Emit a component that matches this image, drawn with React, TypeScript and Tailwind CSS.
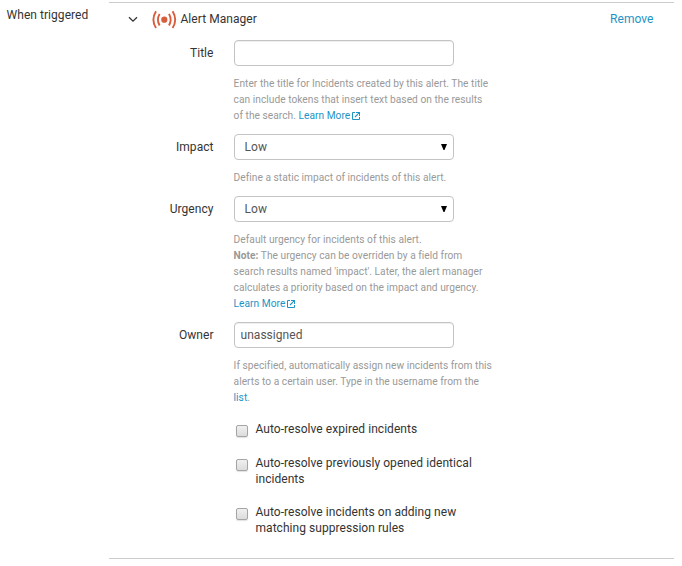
import type { ReactNode } from "react";

function ExternalIcon() {
  return (
    <svg className="ml-[2px] inline-block h-[8px] w-[8px] align-[-0.5px]" viewBox="0 0 8 8" fill="none" stroke="currentColor">
      <path d="M3 .5H.5V7.5H7.5V5" strokeWidth="1" />
      <path d="M4 .5H7.5V4M7.2 .8L3 5" strokeWidth="1.1" />
    </svg>
  );
}

function AlertIcon() {
  return (
    <svg className="h-[20px] w-[26px]" viewBox="0 0 26 20" fill="none" stroke="#d85d3c" strokeWidth="1.9">
      <circle cx="12.3" cy="9.7" r="3.1" fill="#d85d3c" stroke="none" />
      <path d="M7.6 3.9Q4.3 9.7 7.6 15.5M17 3.9Q20.3 9.7 17 15.5" />
      <path d="M4 1.3Q-1.2 9.7 4 18.1M20.6 1.3Q25.8 9.7 20.6 18.1" />
    </svg>
  );
}

function Link({ children }: { children: ReactNode }) {
  return <a className="text-[#1e93c6]">{children}</a>;
}

function Field({ label, control, children }: { label: string; control: ReactNode; children: ReactNode }) {
  return (
    <div className="mb-[10px] flex">
      <label className="w-[104.5px] pt-[5px] text-right">{label}</label>
      <div className="ml-[20.5px] w-[270px]">
        {control}
        <div className="-ml-[0.4px] mt-[10px] whitespace-nowrap text-[10.2px] leading-4 tracking-[0.027px] text-[#999]">{children}</div>
      </div>
    </div>
  );
}

function TextBox({ value }: { value: string }) {
  return (
    <input
      type="text"
      defaultValue={value}
      className="block h-[26px] w-[220px] rounded-[4px] border border-[#c4c4c4] bg-white px-[5.5px] text-[12px] tracking-[0.04px] text-[#555] shadow-[inset_0_1px_1px_rgba(0,0,0,0.07)] outline-none"
    />
  );
}

function SelectBox() {
  return (
    <div className="flex h-[26px] w-[220px] items-center justify-between rounded-[4px] border border-[#c4c4c4] bg-white pr-[6px] pl-[9.5px] text-[12px] text-[#555]">
      <span>Low</span>
      <svg className="h-[6px] w-[6px]" viewBox="0 0 6 6" fill="#000">
        <path d="M0 0H6L3.5 6H2.5Z" />
      </svg>
    </div>
  );
}

function Check({ children }: { children: ReactNode }) {
  return (
    <label className="flex whitespace-nowrap">
      <span className="mt-1 mr-[7.5px] h-3 w-3 shrink-0 rounded-[2px] border border-[#a5a5a5] bg-linear-to-b from-[#f0f0f0] to-[#dcdcdc] shadow-[0_1px_1px_rgba(0,0,0,0.12)]" />
      <span>{children}</span>
    </label>
  );
}

export default function App() {
  return (
    <main className="flex h-[566px] w-[682px] bg-white font-[Roboto,sans-serif] text-[12px] leading-4 tracking-[0.045px] text-[#333]">
      <div className="w-[109px] pt-[7px] pl-[6.6px]">When triggered</div>
      <section className="mt-[2px] h-[557px] w-[565px] border-y border-[#ccc]">
        <header className="flex h-[37px] pr-[20.5px] pl-[19px]">
          <svg className="mt-[13px] h-[7px] w-[10px]" viewBox="0 0 10 7" fill="none" stroke="#333" strokeWidth="1.3">
            <path d="M1 1.2L5 5.2L9 1.2" />
          </svg>
          <div className="mt-[7px] ml-[14px]">
            <AlertIcon />
          </div>
          <span className="mt-2 ml-[2.5px]">Alert Manager</span>
          <span className="mt-2 ml-auto">
            <Link>Remove</Link>
          </span>
        </header>
        <Field label="Title" control={<TextBox value="" />}>
          Enter the title for Incidents created by this alert. The title
          <br />
          can include tokens that insert text based on the results
          <br />
          of the search. <Link>Learn More<ExternalIcon /></Link>
        </Field>
        <Field label="Impact" control={<SelectBox />}>
          Define a static impact of incidents of this alert.
        </Field>
        <Field label="Urgency" control={<SelectBox />}>
          Default urgency for incidents of this alert.
          <br />
          <b>Note:</b> The urgency can be overriden by a field from
          <br />
          search results named 'impact'. Later, the alert manager
          <br />
          calculates a priority based on the impact and urgency.
          <br />
          <Link>Learn More<ExternalIcon /></Link>
        </Field>
        <Field label="Owner" control={<TextBox value="unassigned" />}>
          If specified, automatically assign new incidents from this
          <br />
          alerts to a certain user. Type in the username from the
          <br />
          <Link>list</Link>.
        </Field>
        <div className="mt-[15px] ml-[127px] flex flex-col gap-[17px]">
          <div className="mb-px">
            <Check>Auto-resolve expired incidents</Check>
          </div>
          <Check>
            Auto-resolve previously opened identical
            <br />
            incidents
          </Check>
          <Check>
            Auto-resolve incidents on adding new
            <br />
            matching suppression rules
          </Check>
        </div>
      </section>
    </main>
  );
}
